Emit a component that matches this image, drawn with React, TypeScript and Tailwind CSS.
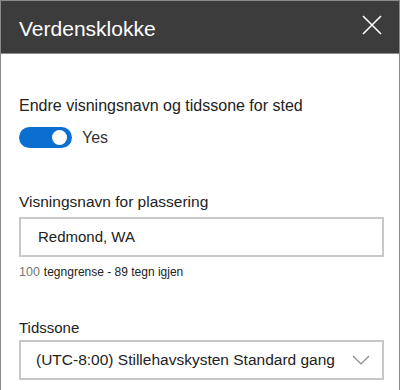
import React from "react";

export default function App() {
  const font = { fontFamily: '"Liberation Sans", Arial, sans-serif' };
  return (
    <div
      className="w-[400px] h-[390px] bg-white border-l border-r border-t border-[#8a8a8a] overflow-hidden text-[#333333]"
      style={font}
    >
      <div className="h-[53px] bg-[#3c3c3c] border-b border-[#8f8f8f] flex items-center justify-between pl-[18px] pr-[17px]">
        <div className="text-white text-[21px] leading-none pt-[3px]">Verdensklokke</div>
        <svg width="20" height="20" viewBox="0 0 20 20" className="mt-[-4px]">
          <path d="M1 1 L19 19 M19 1 L1 19" stroke="white" strokeWidth="1.6" fill="none" />
        </svg>
      </div>
      <div className="pl-[18px] pr-[15px]">
        <div className="pt-[42px] text-[16px] leading-[20px] text-[#222222]">
          Endre visningsnavn og tidssone for sted
        </div>
        <div className="mt-[11px] flex items-center gap-[10px]">
          <div className="w-[53px] h-[21px] rounded-full bg-[#0a6fd0] flex items-center justify-end pr-[5px]">
            <div className="w-[15px] h-[15px] rounded-full bg-white" />
          </div>
          <div className="text-[16px] leading-[20px] text-[#333333]">Yes</div>
        </div>
        <div className="mt-[44px] text-[15.5px] leading-[20px] text-[#222222]">
          Visningsnavn for plassering
        </div>
        <div className="mt-[5px] h-[40px] border-2 border-[#c8c8c8] flex items-center pl-[17px] text-[15px] text-[#222222]">
          Redmond, WA
        </div>
        <div className="mt-[7px] text-[12px] leading-[16px] flex items-baseline">
          <span className="text-[#777777] text-[12.5px]">100</span>
          <span className="ml-[4px] text-[#222222]">tegngrense - 89 tegn igjen</span>
        </div>
        <div className="mt-[38px] text-[15px] leading-[20px] text-[#222222]">Tidssone</div>
        <div className="mt-[2px] h-[40px] border-2 border-[#c8c8c8] flex items-center justify-between pl-[15px] pr-[12px]">
          <span className="text-[15.5px] text-[#222222]">(UTC-8:00) Stillehavskysten Standard gang</span>
          <svg width="18" height="10" viewBox="0 0 18 10">
            <path d="M1 1 L9 9 L17 1" stroke="#8a8a8a" strokeWidth="1.2" fill="none" />
          </svg>
        </div>
      </div>
    </div>
  );
}
